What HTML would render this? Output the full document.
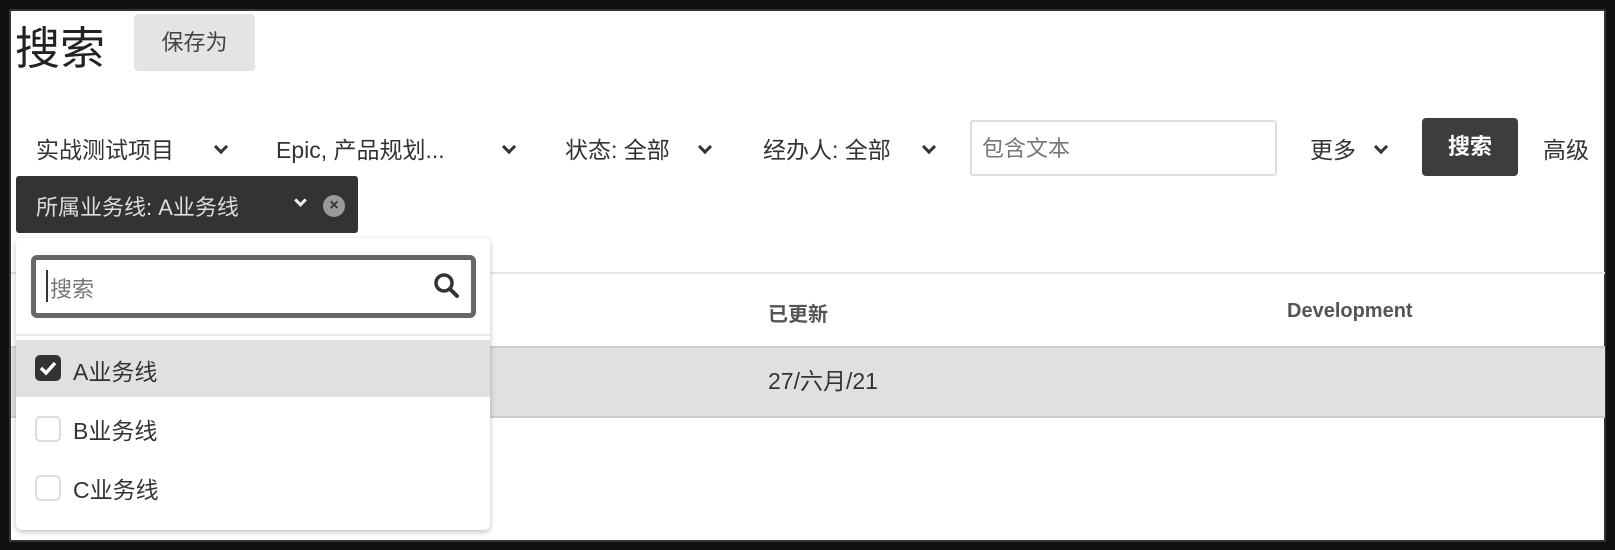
<!DOCTYPE html>
<html><head><meta charset="utf-8"><style>
*{margin:0;padding:0;box-sizing:border-box}
body{width:1615px;height:550px;background:#111;position:relative;overflow:hidden;font-family:"Liberation Sans","Noto Sans CJK SC",sans-serif;color:#333}
#p{position:absolute;left:9px;top:9px;width:1597px;height:533px;background:#fff;border:2px solid #333}
.a{position:absolute;white-space:nowrap}
.f{font-size:23px;color:#333;top:131px}
.chev{display:inline-block;width:10px;height:10px;border-right:3px solid #333;border-bottom:3px solid #333;transform:rotate(45deg)}
</style></head><body>
<div id="p"></div>
<div class="a" style="left:15px;top:12px;font-size:45px;color:#222">搜索</div>
<div class="a" style="left:134px;top:14px;width:121px;height:57px;background:#e4e4e4;border-radius:4px;font-size:22px;line-height:57px;text-align:center;color:#444">保存为</div>

<div class="a f" style="left:36px">实战测试项目</div><span class="a chev" style="left:216px;top:142px"></span>
<div class="a f" style="left:276px">Epic, 产品规划...</div><span class="a chev" style="left:504px;top:142px"></span>
<div class="a f" style="left:565px">状态: 全部</div><span class="a chev" style="left:700px;top:142px"></span>
<div class="a f" style="left:763px">经办人: 全部</div><span class="a chev" style="left:924px;top:142px"></span>
<div class="a" style="left:970px;top:120px;width:307px;height:56px;border:2px solid #ddd;border-radius:3px;font-size:22px;line-height:54px;padding-left:10px;color:#777">包含文本</div>
<div class="a f" style="left:1310px">更多</div><span class="a chev" style="left:1376px;top:142px"></span>
<div class="a" style="left:1422px;top:118px;width:96px;height:58px;background:#3e3c3c;border-radius:4px;color:#fff;font-size:22px;line-height:58px;text-align:center;font-weight:bold">搜索</div>
<div class="a f" style="left:1543px">高级</div>

<div class="a" style="left:16px;top:176px;width:342px;height:57px;background:#333;border-radius:3px"></div>
<div class="a" style="left:36px;top:190px;font-size:22px;color:#ddd">所属业务线: A业务线</div>
<span class="a chev" style="left:296px;top:196px;border-color:#eee;width:9px;height:9px"></span>
<div class="a" style="left:323px;top:195px;width:22px;height:22px;border-radius:50%;background:#999;color:#333;font-size:16px;line-height:22px;text-align:center;font-weight:bold">×</div>

<div class="a" style="left:11px;top:272px;width:1594px;height:2px;background:#e6e6e6"></div>
<div class="a" style="left:768px;top:298px;font-size:20px;font-weight:bold;color:#555">已更新</div>
<div class="a" style="left:1287px;top:300px;font-size:20px;font-weight:bold;color:#555">Development</div>
<div class="a" style="left:11px;top:346px;width:1594px;height:72px;background:#e0e0e0;border-top:2px solid #ccc;border-bottom:2px solid #ccc"></div>
<div class="a" style="left:768px;top:362px;font-size:23px;color:#333">27/六月/21</div>

<div class="a" style="left:16px;top:238px;width:474px;height:292px;background:#fff;border-radius:6px;box-shadow:0 2px 6px rgba(0,0,0,.25)"></div>
<div class="a" style="left:31px;top:255px;width:445px;height:63px;border:5px solid #666;border-radius:6px;background:#fff"></div>
<div class="a" style="left:46px;top:270px;width:2px;height:32px;background:#333"></div>
<div class="a" style="left:50px;top:272px;font-size:22px;color:#777">搜索</div>
<svg class="a" style="left:432px;top:271px" width="30" height="30" viewBox="0 0 30 30"><circle cx="12" cy="12" r="8" fill="none" stroke="#333" stroke-width="3.5"/><path d="M18 18l7 7" stroke="#333" stroke-width="4" stroke-linecap="round"/></svg>
<div class="a" style="left:16px;top:334px;width:474px;height:2px;background:#e8e8e8"></div>
<div class="a" style="left:16px;top:340px;width:474px;height:57px;background:#e0e0e0"></div>
<div class="a" style="left:35px;top:355px;width:26px;height:26px;border-radius:5px;background:#333"></div>
<svg class="a" style="left:35px;top:355px" width="26" height="26"><path d="M6 13l5 5 9-10" fill="none" stroke="#fff" stroke-width="3.5"/></svg>
<div class="a" style="left:73px;top:353px;font-size:23px;color:#333">A业务线</div>
<div class="a" style="left:35px;top:416px;width:26px;height:26px;border-radius:5px;border:2px solid #ddd"></div>
<div class="a" style="left:73px;top:412px;font-size:23px;color:#333">B业务线</div>
<div class="a" style="left:35px;top:475px;width:26px;height:26px;border-radius:5px;border:2px solid #ddd"></div>
<div class="a" style="left:73px;top:471px;font-size:23px;color:#333">C业务线</div>
</body></html>
